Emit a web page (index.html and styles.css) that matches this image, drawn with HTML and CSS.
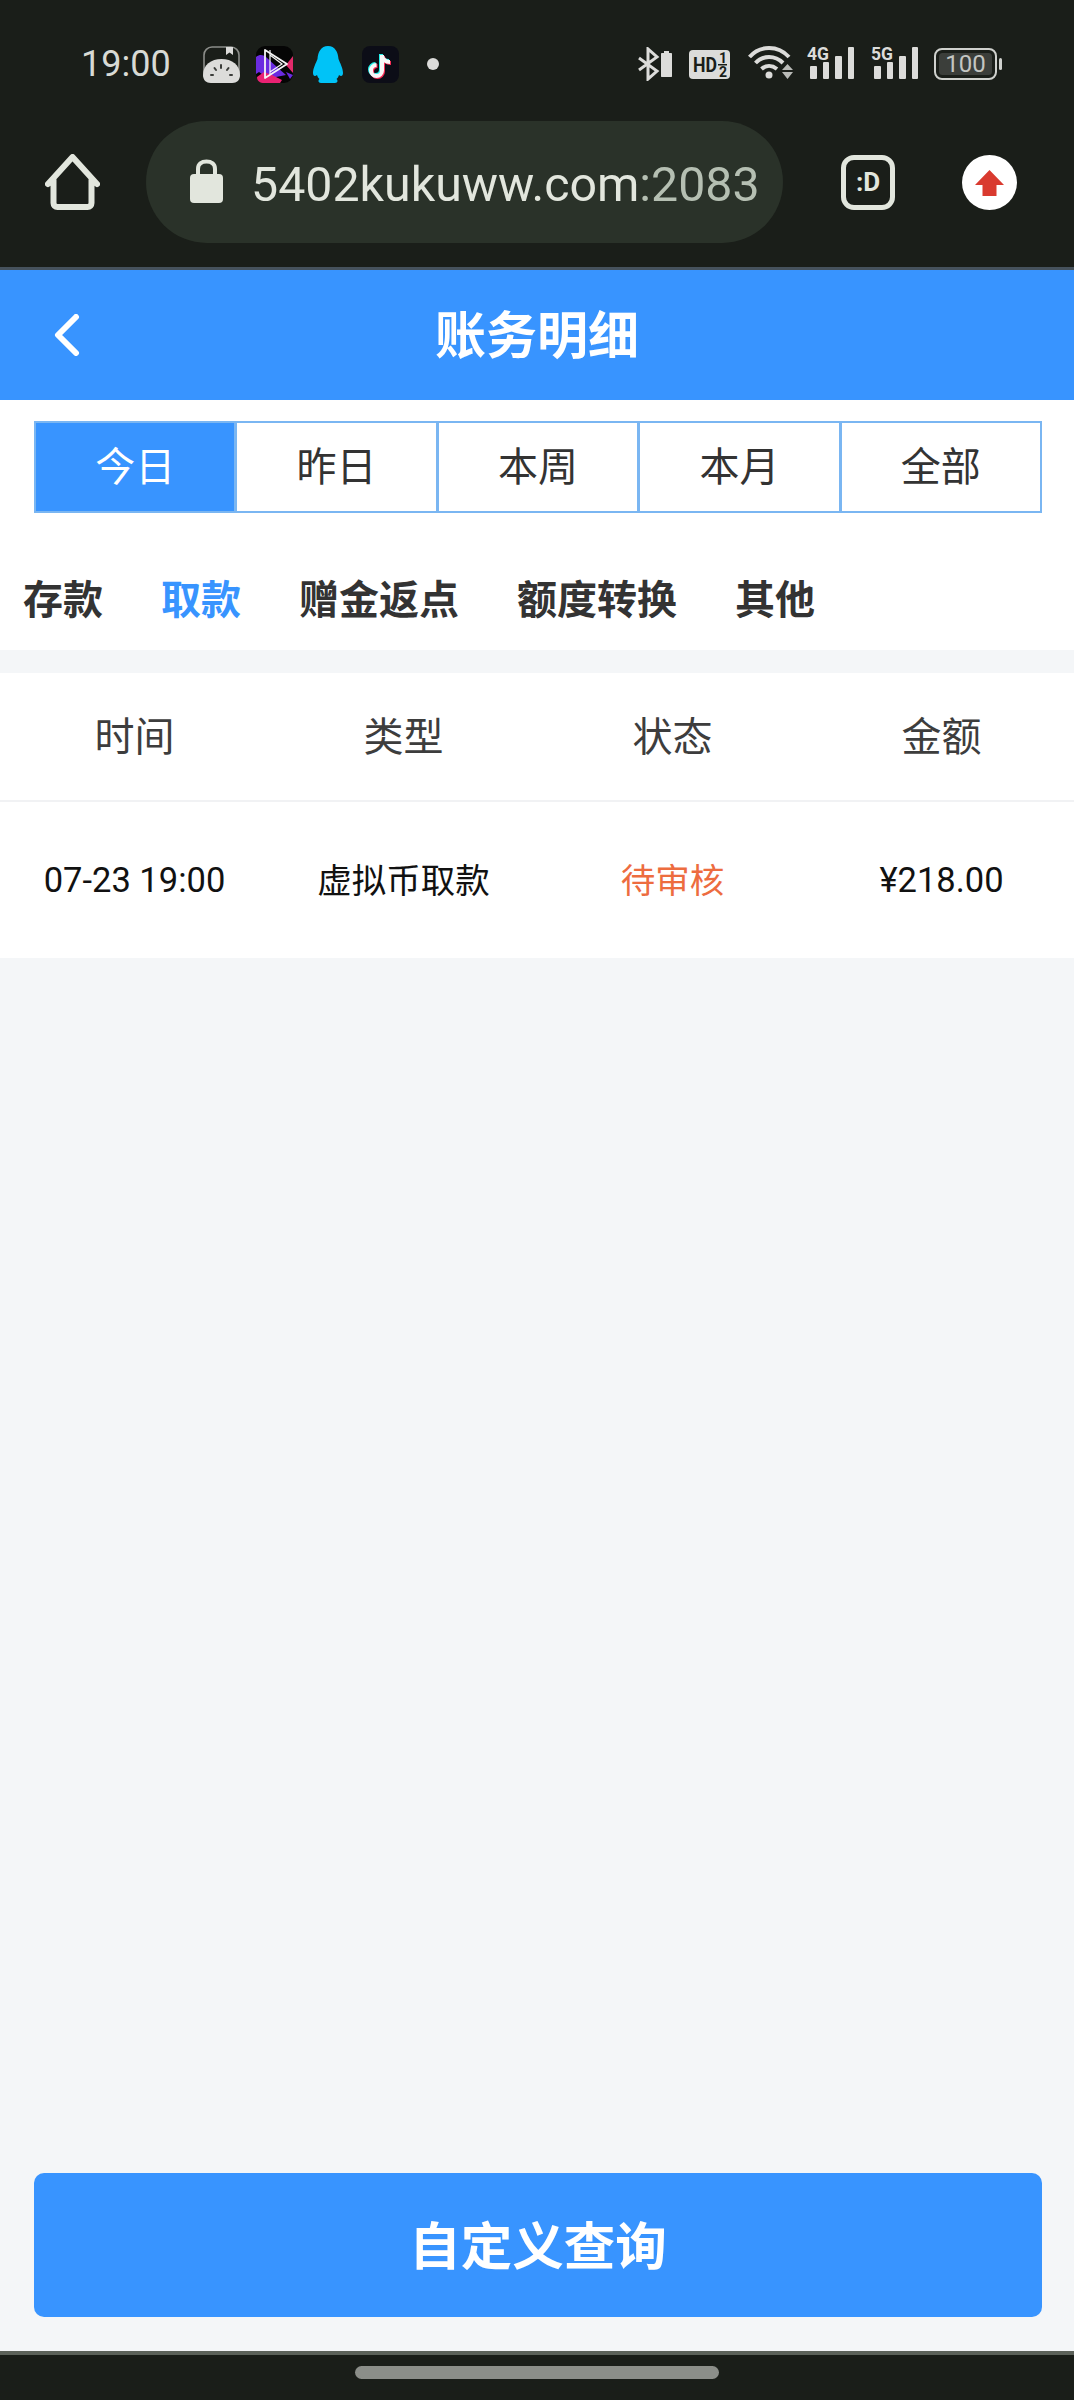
FILE: index.html
```html
<!DOCTYPE html>
<html lang="zh-CN">
<head>
<meta charset="utf-8">
<title>账务明细</title>
<link rel="stylesheet" href="styles.css">
</head>
<body>
<div class="phone">
  <div class="chrome">
    <div class="status">
      <div class="status-group">
        <span class="time">19:00</span>
        <svg class="ic-book" width="37" height="37" viewBox="0 0 37 37"><rect x="1" y="1" width="35" height="35" rx="8" fill="none" stroke="#8b8d89" stroke-width="1.6"/><path d="M0 29 C0 19 8 13 18.500 13 C29 13 37 19 37 29 C37 34 34 37 29 37 H8 C3 37 0 34 0 29Z" fill="#dcdcda"/><path d="M23 1 H30 V9 L26.500 6.500 L23 9Z" fill="#dcdcda"/><g stroke="#3b3d3a" stroke-width="2" stroke-linecap="round"><path d="M18 19 V22"/><path d="M11.500 22 L13 24"/><path d="M25.500 22 L24 24"/><path d="M8 29 H10"/><path d="M27 29 H29"/></g></svg>
        <svg class="ic-video" width="37" height="37" viewBox="0 0 37 37"><rect width="37" height="37" rx="9" fill="#050505"/><path d="M0 11 C4 8 7 9 10 11 L22 22 L30 29 L20 31 L13 33 L3 26 L0 28Z" fill="#6a2be0"/><path d="M1 31 L8 26 L16 29 L26 34 L24 37 H8 C4 37 1 35 1 31Z" fill="#ea2273"/><path d="M37 10 L30 19 L37 27Z" fill="#e32a6a"/><path d="M30 26 L37 29 L34 33Z" fill="#6a2be0"/><path d="M9 4 L31 18 L9 32Z" fill="none" stroke="#f5f5f5" stroke-width="1.800" stroke-linejoin="round"/><path d="M14 4 V28 M14 9 L26 18 L14 26" fill="none" stroke="#f5f5f5" stroke-width="1.200"/></svg>
        <svg class="ic-qq" width="30" height="37" viewBox="0 0 30 37"><path d="M15 0 C22 0 25 6 25.500 13 C27 17 30 22 30 27 C30 30 28 31 26 29 C25.500 31 24.500 32 23.500 33 C25 34 25 37 22 37 H8 C5 37 5 34 6.500 33 C5.500 32 4.500 31 4 29 C2 31 0 30 0 27 C0 22 3 17 4.500 13 C5 6 8 0 15 0Z" fill="#00c3f7"/></svg>
        <svg class="ic-tiktok" width="37" height="37" viewBox="0 0 37 37"><rect width="37" height="37" rx="8" fill="#0c0d17"/><g fill="none" stroke-width="4"><path d="M19 8 V23.500 A5.500 5.500 0 1 1 13.500 18 M19 9 C20 13 23 15 27 15" stroke="#25f0ea"/><path d="M21 10 V25.500 A5.500 5.500 0 1 1 15.500 20 M21 11 C22 15 25 17 29 17" stroke="#fa2c55"/><path d="M20 9 V24.500 A5.500 5.500 0 1 1 14.500 19 M20 10 C21 14 24 16 28 16" stroke="#f7f7f7"/></g></svg>
        <span class="dot"></span>
      </div>
      <div class="status-group">
        <svg class="ic-bt" width="34" height="34" viewBox="0 0 34 34"><path d="M1 11 L19 24 L10 32 V2 L19 10 L1 23" fill="none" stroke="#dcdcda" stroke-width="3"/><path d="M26 6 V4 H31 V6 H33 C33.600 6 34 6.400 34 7 V29 C34 30 33.500 30 33 30 H24 C23.500 30 23 30 23 29 V7 C23 6.400 23.400 6 24 6Z" fill="#dcdcda"/></svg>
        <svg class="ic-hd" width="41" height="29" viewBox="0 0 41 29"><rect width="41" height="29" rx="4" fill="#dcdcda"/><text class="hd-main" x="4" y="22" textLength="24" lengthAdjust="spacingAndGlyphs">HD</text><text class="hd-frac" x="30" y="13">1</text><rect x="29" y="14" width="9" height="1.500" fill="#1a1e19"/><text class="hd-frac" x="30" y="26.500">2</text></svg>
        <svg class="ic-wifi" width="45" height="35" viewBox="0 0 45 35"><g fill="none" stroke="#dcdcda" stroke-width="4"><path d="M1.500 12 C12 0 30 0 41 12"/><path d="M7.500 18 C15 10 27 10 35 18"/><path d="M13.500 24 C18 20 24 20 29 24"/></g><circle cx="21" cy="30" r="3.500" fill="#dcdcda"/><path d="M34 25 L39.500 19 L45 25Z M34 27 H45 L39.500 34Z" fill="#b9bbb7"/></svg>
        <svg class="ic-net" width="47" height="37" viewBox="0 -4 47 37"><text class="net-label" x="0" y="14" textLength="22" lengthAdjust="spacingAndGlyphs">4G</text><g fill="#dcdcda"><rect x="3" y="20" width="7" height="13" rx="1"/><rect x="16" y="16" width="6" height="17" rx="1"/><rect x="28" y="10" width="7" height="23" rx="1"/><rect x="41" y="1" width="6" height="32" rx="1"/></g></svg>
        <svg class="ic-net5" width="47" height="37" viewBox="0 -4 47 37"><text class="net-label" x="0" y="14" textLength="22" lengthAdjust="spacingAndGlyphs">5G</text><g fill="#dcdcda"><rect x="3" y="20" width="7" height="13" rx="1"/><rect x="16" y="16" width="6" height="17" rx="1"/><rect x="28" y="10" width="7" height="23" rx="1"/><rect x="41" y="1" width="6" height="32" rx="1"/></g></svg>
        <svg class="ic-batt" width="68" height="32" viewBox="0 0 68 32"><rect x="1" y="1" width="61" height="30" rx="7" fill="none" stroke="#cfd1cd" stroke-width="2"/><rect x="5" y="5" width="53" height="22" rx="3.500" fill="#3b3e3a"/><rect x="65" y="10" width="3" height="12" rx="1.500" fill="#cfd1cd"/><text class="batt-text" x="31.500" y="24">100</text></svg>
      </div>
    </div>
    <div class="toolbar">
      <svg class="ic-home" width="55" height="56" viewBox="0 0 55 56"><path d="M3 30 L27.500 3 L52 30 M8.500 26 V49 C8.500 51.500 10 53 12.500 53 H42.500 C45 53 46.500 51.500 46.500 49 V26" fill="none" stroke="#e2e6dd" stroke-width="6" stroke-linecap="round" stroke-linejoin="round"/></svg>
      <div class="pill">
        <svg class="ic-lock" width="33" height="44" viewBox="0 0 33 44"><path d="M8 17 V10 C8 5 11.500 2.500 16.500 2.500 C21.500 2.500 25 5 25 10 V17" fill="none" stroke="#e2e6dd" stroke-width="4"/><rect y="15" width="33" height="29" rx="4" fill="#e2e6dd"/></svg>
        <span class="url">5402kukuww.com<span class="url-port">:2083</span></span>
      </div>
      <div class="smile"><span>:D</span></div>
      <svg class="ic-update" width="55" height="55" viewBox="0 0 55 55"><circle cx="27.500" cy="27.500" r="27.500" fill="#fff"/><path d="M27.500 15 L42 30 H34.500 V41 H20.500 V30 H13Z" fill="#d93a2f"/></svg>
    </div>
  </div>

  <main class="app">
    <header class="head">
      <svg class="ic-back" width="30" height="42" viewBox="0 0 30 42"><path d="M25 3 L7 21 L25 39" fill="none" stroke="#fff" stroke-width="6" stroke-linecap="round" stroke-linejoin="round"/></svg>
      <h1 class="title">账务明细</h1>
    </header>

    <section class="filters">
      <div class="ranges">
        <div class="range range-on">今日</div>
        <div class="range">昨日</div>
        <div class="range">本周</div>
        <div class="range">本月</div>
        <div class="range">全部</div>
      </div>
      <nav class="kinds">
        <span class="kind">存款</span>
        <span class="kind kind-on">取款</span>
        <span class="kind">赠金返点</span>
        <span class="kind">额度转换</span>
        <span class="kind">其他</span>
      </nav>
    </section>

    <section class="table">
      <div class="row row-head">
        <div>时间</div><div>类型</div><div>状态</div><div>金额</div>
      </div>
      <div class="row row-body">
        <div class="cell-num">07-23 19:00</div>
        <div class="cell-cjk">虚拟币取款</div>
        <div class="cell-cjk pending">待审核</div>
        <div class="cell-num">¥218.00</div>
      </div>
    </section>

    <div class="footer"><button class="query">自定义查询</button></div>
  </main>

  <div class="navbar"><span class="handle"></span></div>
</div>
</body>
</html>
```

FILE: styles.css
```css
* { box-sizing: border-box; }
html, body { margin: 0; padding: 0; }
body {
  width: 1074px;
  height: 2400px;
  overflow: hidden;
  font-family: Roboto, "Noto Sans CJK SC", "Liberation Sans", sans-serif;
  background: #f4f6f8;
}
.phone { height: 2400px; display: flex; flex-direction: column; }

/* Browser chrome */
.chrome { height: 270px; background: #1a1e19; border-bottom: 3px solid #46525c; flex: none; }
.status {
  height: 121px;
  padding: 7px 72px 0 81px;
  display: flex;
  justify-content: space-between;
  align-items: center;
}
.status-group { display: flex; align-items: center; }
.status-group svg { display: block; flex: none; }
.time { width: 90px; font-size: 36px; color: #d8dad5; }
.ic-book { margin-left: 32px; }
.ic-video { margin-left: 16px; }
.ic-qq { margin-left: 20px; }
.ic-tiktok { margin-left: 19px; }
.dot { width: 12px; height: 12px; margin-left: 28px; border-radius: 50%; background: #dcdcda; }
.ic-hd { margin-left: 17px; }
.ic-wifi { margin-left: 18px; margin-top: -3px; }
.ic-net { margin-left: 14px; margin-top: -7px; }
.ic-net5 { margin-left: 17px; margin-top: -7px; }
.ic-batt { margin-left: 16px; }
.hd-main { font: 700 21px Roboto, sans-serif; fill: #1a1e19; }
.hd-frac { font: 700 14px Roboto, sans-serif; fill: #1a1e19; }
.net-label { font: 700 19px Roboto, sans-serif; fill: #dcdcda; }
.batt-text { font: 400 24px Roboto, sans-serif; fill: #c4c6c2; text-anchor: middle; }

.toolbar { height: 122px; padding-left: 45px; display: flex; align-items: center; }
.ic-home { flex: none; }
.pill {
  width: 637px;
  height: 122px;
  margin-left: 46px;
  padding-left: 44px;
  border-radius: 61px;
  background: #2a3229;
  display: flex;
  align-items: center;
  flex: none;
}
.ic-lock { flex: none; margin-top: -2px; }
.url { margin: 5px 0 0 28px; font-size: 48.300px; color: #e2e6dd; white-space: nowrap; }
.url-port { color: #b5bfb2; }
.smile {
  width: 54px;
  height: 55px;
  margin-left: 58px;
  border: 5px solid #e2e6dd;
  border-radius: 13px;
  display: flex;
  align-items: center;
  justify-content: center;
  color: #e2e6dd;
  font-size: 26px;
  font-weight: 700;
  flex: none;
}
.ic-update { margin-left: 67px; flex: none; }

/* App */
.app { flex: 1; display: flex; flex-direction: column; min-height: 0; }
.head {
  height: 130px;
  background: #3894ff;
  display: flex;
  align-items: center;
  justify-content: center;
  position: relative;
  flex: none;
}
.ic-back { position: absolute; left: 51px; top: 44px; }
.title { margin: 0; padding-bottom: 7px; font-size: 51px; font-weight: 700; color: #fff; }

.filters { background: #fff; height: 250px; padding-top: 21px; flex: none; }
.ranges {
  margin: 0 32px 0 35px;
  height: 92px;
  display: grid;
  grid-template-columns: repeat(5, 1fr);
}
.range {
  border: 2px solid #7ab6f2;
  margin-left: -1px;
  padding-bottom: 7px;
  display: flex;
  align-items: center;
  justify-content: center;
  font-size: 40px;
  color: #333;
}
.range-on { background: #3894ff; color: #fff; }
.kinds {
  margin-top: 55px;
  padding-left: 23px;
  display: flex;
  gap: 58px;
  font-size: 40px;
  font-weight: 700;
  color: #333;
}
.kind-on { color: #3894ff; }

.table { margin-top: 23px; background: #fff; flex: none; overflow: hidden; }
.row { display: grid; grid-template-columns: repeat(4, 269px); text-align: center; align-items: center; }
.row-head { height: 129px; padding-bottom: 5px; font-size: 40px; color: #3d3d3d; border-bottom: 2px solid #f1f2f4; }
.row-body { height: 156px; font-size: 34.500px; color: #111; }
.cell-cjk { padding-bottom: 4px; }
.pending { color: #ed6c3f; }

.footer { margin-top: auto; padding: 0 32px 34px 34px; }
.query {
  display: block;
  width: 100%;
  height: 144px;
  padding: 0 0 6px;
  border: 0;
  border-radius: 10px;
  background: #3894ff;
  color: #fff;
  font-family: inherit;
  font-size: 51.500px;
  font-weight: 700;
}

.navbar {
  height: 49px;
  flex: none;
  background: #1a1e19;
  border-top: 4px solid #5c625a;
  display: flex;
  justify-content: center;
  padding-top: 11px;
}
.handle { width: 364px; height: 13px; border-radius: 7px; background: #8b8e89; }
```
